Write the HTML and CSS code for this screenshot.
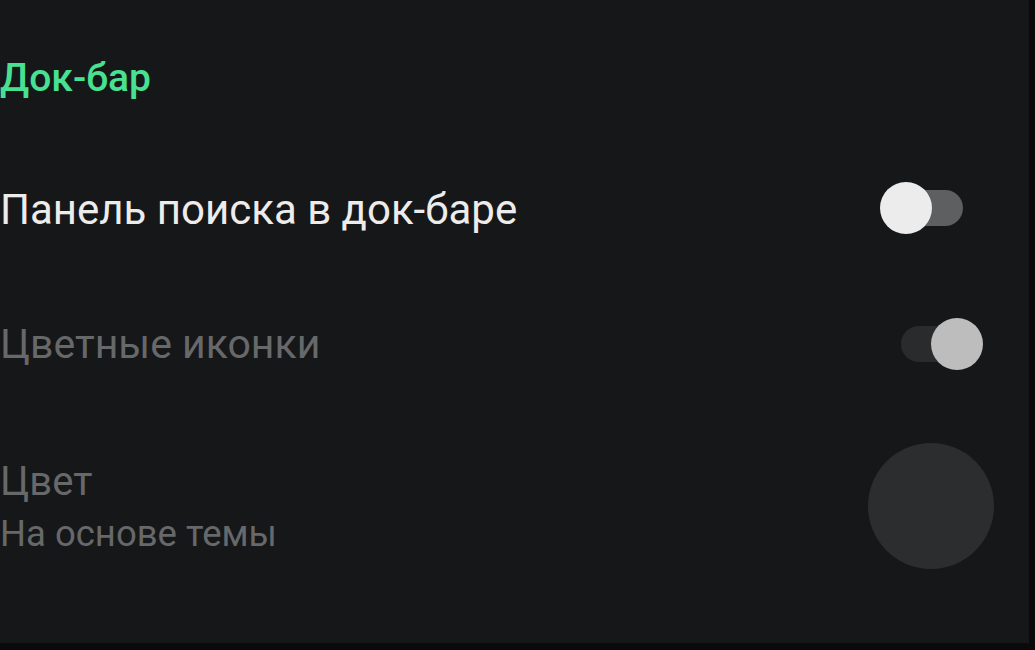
FILE: index.html
```html
<!DOCTYPE html>
<html lang="ru">
<head>
<meta charset="utf-8">
<link rel="stylesheet" href="styles.css">
</head>
<body>
<div class="panel">
  <div class="section-title">Док-бар</div>
  <div class="row row-toggle">
    <div class="label primary">Панель поиска в док-баре</div>
    <div class="widget">
      <div class="toggle off"><span class="thumb"></span></div>
    </div>
  </div>
  <div class="row row-toggle">
    <div class="label disabled">Цветные иконки</div>
    <div class="widget">
      <div class="toggle on"><span class="thumb"></span></div>
    </div>
  </div>
  <div class="row row-color">
    <div class="label-group">
      <div class="title disabled">Цвет</div>
      <div class="summary">На основе темы</div>
    </div>
    <div class="widget">
      <div class="swatch"></div>
    </div>
  </div>
</div>
</body>
</html>
```

FILE: styles.css
```css
html, body {
  margin: 0;
  padding: 0;
  background: #0a0a0b;
  width: 1035px;
  height: 650px;
  overflow: hidden;
}
.panel {
  width: 1029px;
  height: 643px;
  background: #161719;
  font-family: Roboto, "Noto Sans", sans-serif;
  display: flex;
  flex-direction: column;
}
.section-title {
  height: 140px;
  box-sizing: border-box;
  padding-top: 56px;
  font-size: 39px;
  font-weight: 500;
  line-height: 44px;
  color: #48e192;
}
.row {
  display: flex;
  align-items: center;
  justify-content: space-between;
  padding-right: 35px;
}
.row-toggle {
  height: 136px;
}
.row-color {
  height: 188px;
}
.label {
  font-size: 41px;
  line-height: 48px;
}
.label.primary {
  font-size: 42px;
  padding-top: 4px;
  color: #ececec;
}
.disabled {
  color: #67686a;
}
.title {
  font-size: 40px;
  line-height: 48px;
  padding-top: 2px;
}
.summary {
  margin-top: 6px;
  font-size: 36.5px;
  line-height: 44px;
  color: #67686a;
}
.widget {
  width: 126px;
  display: flex;
  justify-content: center;
  align-items: center;
}
.toggle {
  position: relative;
  width: 62px;
  height: 36px;
  border-radius: 18px;
  margin-left: 2px;
}
.toggle.off {
  background: #5e5f61;
}
.toggle.on {
  background: #2a2b2d;
}
.thumb {
  position: absolute;
  top: -8px;
  width: 52px;
  height: 52px;
  border-radius: 50%;
}
.off .thumb {
  left: -21px;
  background: #ececec;
}
.on .thumb {
  left: 30px;
  background: #bdbdbd;
}
.swatch {
  width: 126px;
  height: 126px;
  border-radius: 50%;
  background: #2c2d2f;
}
```
